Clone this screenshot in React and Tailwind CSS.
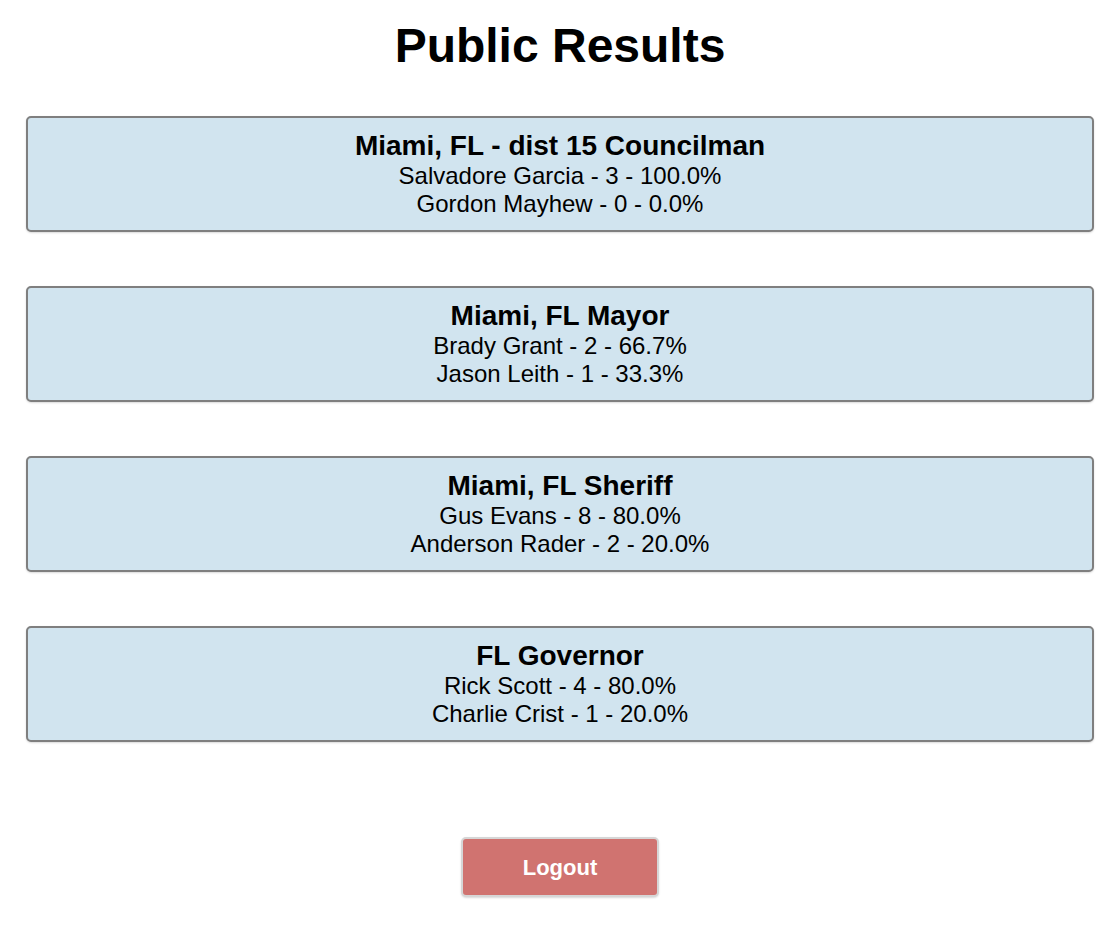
import React from 'react';

const races = [
  {
    id: 1,
    title: 'Miami, FL - dist 15 Councilman',
    results: [
      { name: 'Salvadore Garcia', votes: 3, pct: '100.0%' },
      { name: 'Gordon Mayhew', votes: 0, pct: '0.0%' },
    ],
  },
  {
    id: 2,
    title: 'Miami, FL Mayor',
    results: [
      { name: 'Brady Grant', votes: 2, pct: '66.7%' },
      { name: 'Jason Leith', votes: 1, pct: '33.3%' },
    ],
  },
  {
    id: 3,
    title: 'Miami, FL Sheriff',
    results: [
      { name: 'Gus Evans', votes: 8, pct: '80.0%' },
      { name: 'Anderson Rader', votes: 2, pct: '20.0%' },
    ],
  },
  {
    id: 4,
    title: 'FL Governor',
    results: [
      { name: 'Rick Scott', votes: 4, pct: '80.0%' },
      { name: 'Charlie Crist', votes: 1, pct: '20.0%' },
    ],
  },
];

const RaceCard = ({ race }) => (
  <div className="rounded-[5px] border-2 border-[#7f7f7f] bg-[#d1e4ef] px-3 py-3 text-center shadow-[0_1px_2px_rgba(0,0,0,0.15)]">
    <h2 className="text-[28px] font-bold leading-[32px]">{race.title}</h2>
    {race.results.map((r) => (
      <p key={r.name} className="text-[24px] leading-[28px]">
        {r.name} - {r.votes} - {r.pct}
      </p>
    ))}
  </div>
);

export default function App() {
  return (
    <div className="min-h-[926px] bg-white px-[26px] pt-[18px] text-black font-['Liberation_Sans',Arial,sans-serif]">
      <h1 className="text-center text-[48px] font-bold leading-[55px]">Public Results</h1>
      <div className="mt-[43px] flex flex-col gap-[54px]">
        {races.map((race) => (
          <RaceCard key={race.id} race={race} />
        ))}
      </div>
      <div className="mt-[95px] flex justify-center">
        <button
          type="button"
          className="h-[60px] w-[198px] rounded-[5px] border-2 border-[#d6d6d6] bg-[#d07370] text-[22px] font-bold text-white shadow-[0_1px_2px_rgba(0,0,0,0.15)]"
        >
          Logout
        </button>
      </div>
    </div>
  );
}
